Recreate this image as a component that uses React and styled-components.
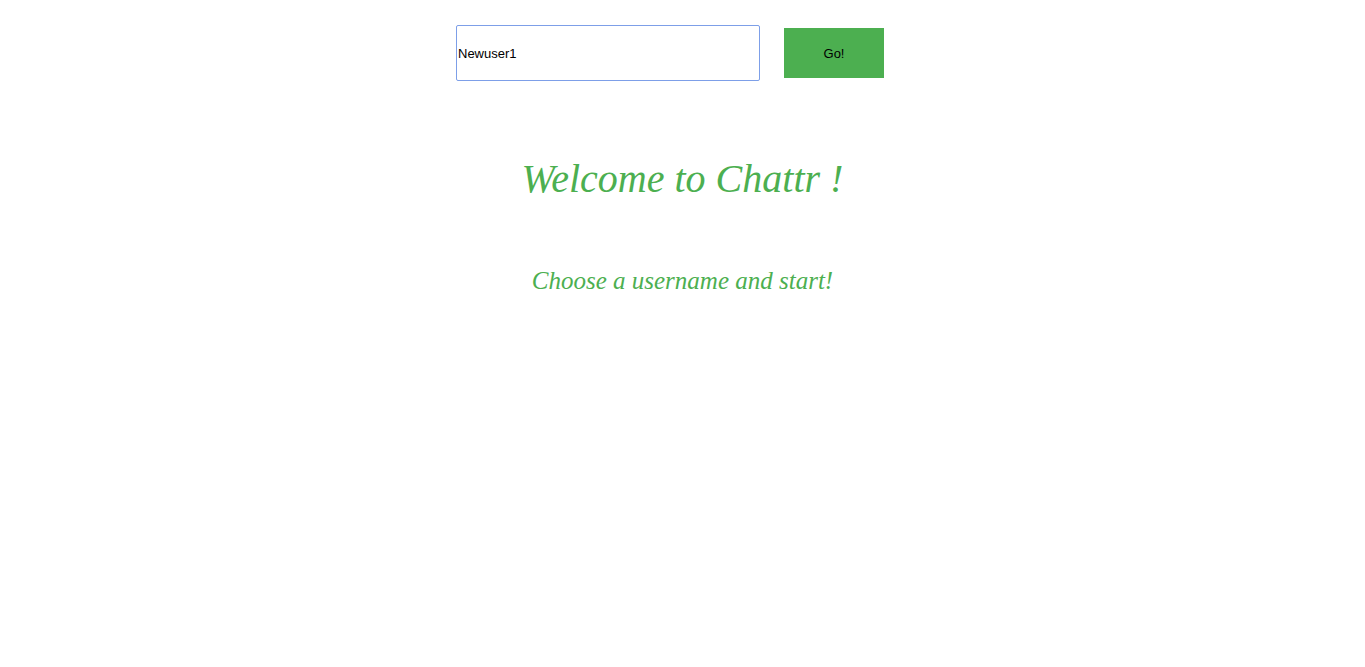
import styled, { createGlobalStyle } from 'styled-components'

const GlobalStyle = createGlobalStyle`
  body {
    margin: 0;
    background: #ffffff;
    font-family: "Liberation Sans", Arial, sans-serif;
  }
`

const Page = styled.div`
  display: flex;
  flex-direction: column;
  align-items: center;
  min-height: 667px;
`

const LoginRow = styled.form`
  display: flex;
  justify-content: center;
  align-items: center;
  padding-top: 25px;
`

const NameInput = styled.input`
  box-sizing: border-box;
  width: 304px;
  height: 56px;
  padding: 0 1px;
  border: 1px solid #7d9fe8;
  border-radius: 2px;
  outline: none;
  font-family: "Liberation Sans", Arial, sans-serif;
  font-size: 13px;
  color: #000;
  caret-color: #000;
`

const GoButton = styled.button`
  width: 100px;
  height: 50px;
  margin: 0 25px 0 24px;
  border: none;
  background: #4caf50;
  color: #000;
  font-family: "Liberation Sans", Arial, sans-serif;
  font-size: 13px;
  cursor: pointer;
`

const Title = styled.h1`
  margin: ${p => p.$top}px 0 0;
  font-family: "Liberation Serif", "Times New Roman", serif;
  font-style: italic;
  font-weight: normal;
  font-size: ${p => p.$size}px;
  line-height: 1;
  color: #4caf50;
  text-align: center;
`

export default function App() {
  return (
    <>
      <GlobalStyle />
      <Page>
        <LoginRow onSubmit={e => e.preventDefault()}>
          <NameInput defaultValue="Newuser1" autoFocus />
          <GoButton type="submit">Go!</GoButton>
        </LoginRow>
        <Title $size={40} $top={78}>Welcome to Chattr !</Title>
        <Title as="h2" $size={25} $top={69}>Choose a username and start!</Title>
      </Page>
    </>
  )
}
